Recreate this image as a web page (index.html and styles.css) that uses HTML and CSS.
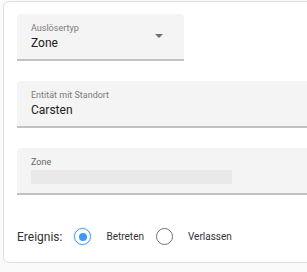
FILE: index.html
```html
<!DOCTYPE html>
<html lang="de">
<head>
    <meta charset="UTF-8">
    <meta name="viewport" content="width=device-width, initial-scale=1.0">
    <title>Auslöser</title>
    <link rel="stylesheet" href="styles.css">
</head>
<body>
    <div class="card">
        <div class="field select">
            <div class="field-text">
                <span class="label">Auslösertyp</span>
                <span class="value">Zone</span>
            </div>
            <span class="arrow"></span>
        </div>

        <div class="field wide">
            <div class="field-text">
                <span class="label">Entität mit Standort</span>
                <span class="value">Carsten</span>
            </div>
        </div>

        <div class="field wide">
            <div class="field-text">
                <span class="label dark">Zone</span>
                <span class="loading"></span>
            </div>
        </div>

        <div class="event">
            <span class="event-title">Ereignis:</span>
            <label class="radio">
                <span class="circle checked"></span>
                <span>Betreten</span>
            </label>
            <label class="radio">
                <span class="circle"></span>
                <span>Verlassen</span>
            </label>
        </div>
    </div>
</body>
</html>
```

FILE: styles.css
```css
*{
    margin: 0;
    padding: 0;
    box-sizing: border-box;
}
body{
    background: #fafafa;
    font-family: Roboto, "Liberation Sans", sans-serif;
    overflow: hidden;
    padding: 1px 0 0 3px;
}
.card{
    width: 340px;
    height: 262px;
    background: white;
    border: 1px solid #e0e0e0;
    border-radius: 6px;
    padding: 12px 13px 0 13px;
}
.field{
    display: flex;
    align-items: flex-start;
    height: 47px;
    background: #f4f4f4;
    border-bottom: 2px solid #c2c2c2;
    border-radius: 4px 4px 0 0;
    padding: 9px 14px 0 14px;
    margin-bottom: 20px;
}
.select{
    width: 167px;
}
.wide{
    width: 100%;
}
.field-text{
    display: flex;
    flex-direction: column;
    flex: 1;
}
.label{
    font-size: 9px;
    line-height: 10px;
    color: #7a7a7a;
}
.label.dark{
    color: #666;
    line-height: 11px;
}
.value{
    font-size: 12px;
    line-height: 14px;
    margin-top: 3px;
    color: #212121;
}
.loading{
    display: block;
    width: 201px;
    height: 14px;
    margin-top: 2px;
    background: #e9e9e9;
}
.arrow{
    width: 0;
    height: 0;
    margin-top: 11px;
    margin-right: 7px;
    border-left: 4px solid transparent;
    border-right: 4px solid transparent;
    border-top: 4px solid #6e6e6e;
}
.event{
    display: flex;
    align-items: center;
    margin-top: 33px;
    height: 17px;
}
.event-title{
    font-size: 12px;
    color: #333;
    margin-right: 12px;
}
.radio{
    display: flex;
    align-items: center;
    font-size: 10px;
    color: #333;
    margin-right: 12px;
}
.circle{
    width: 17px;
    height: 17px;
    border: 1.5px solid #707070;
    border-radius: 50%;
    margin-right: 15px;
    display: flex;
    align-items: center;
    justify-content: center;
}
.circle.checked{
    border-color: #3f9bf2;
    box-shadow: 0 0 0 1px rgba(63, 155, 242, 0.15);
}
.circle.checked::after{
    content: "";
    width: 8px;
    height: 8px;
    border-radius: 50%;
    background: #3f9bf2;
}
```
